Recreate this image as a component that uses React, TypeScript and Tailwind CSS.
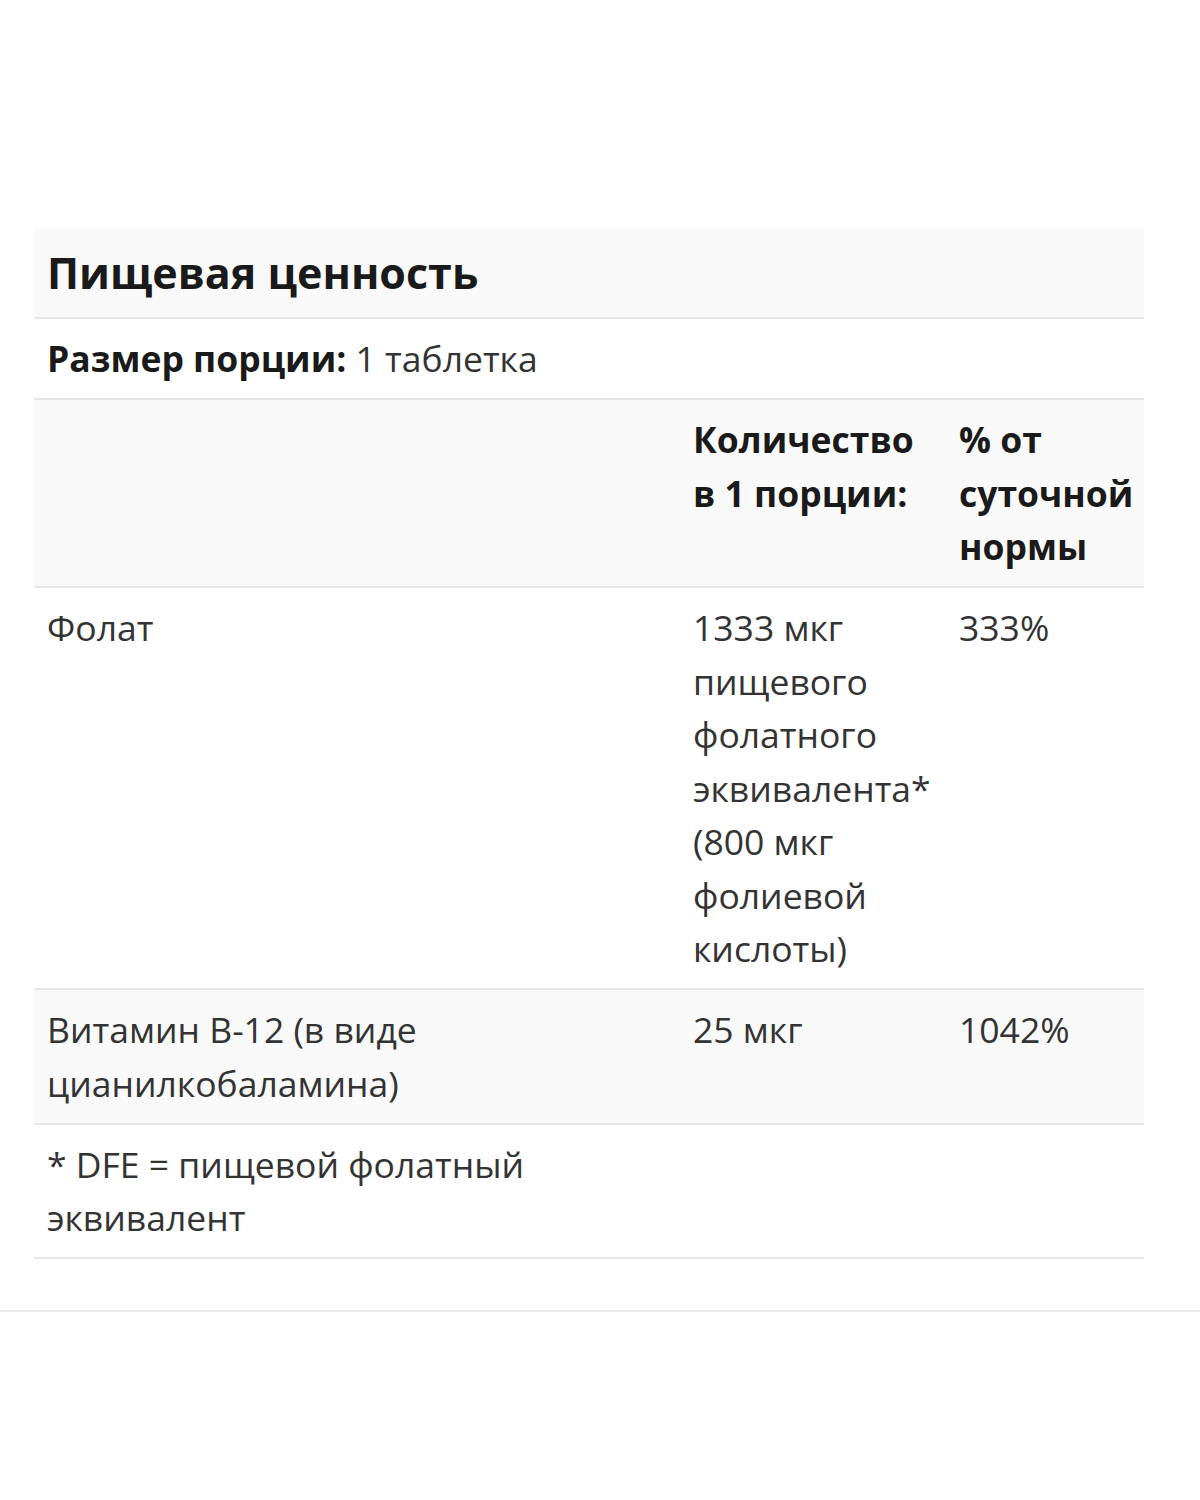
import { FC, ReactNode } from "react";

type Row = {
	name: ReactNode;
	amount: ReactNode;
	dv: ReactNode;
	shaded?: boolean;
	bold?: boolean;
};

const rows: Row[] = [
	{
		name: "",
		amount: (
			<>
				Количество
				<br />в 1 порции:
			</>
		),
		dv: "% от суточной нормы",
		shaded: true,
		bold: true,
	},
	{
		name: "Фолат",
		amount:
			"1333 мкг пищевого фолатного эквивалента* (800 мкг фолиевой кислоты)",
		dv: "333%",
	},
	{
		name: "Витамин B-12 (в виде цианилкобаламина)",
		amount: "25 мкг",
		dv: "1042%",
		shaded: true,
	},
];

const Cell: FC<{ children: ReactNode; bold?: boolean }> = ({
	children,
	bold,
}) => (
	<div
		className={
			"px-[13px] pt-[13px] pb-[12.5px] " +
			(bold ? "font-bold text-[#1a1a1a]" : "text-[#333]")
		}
	>
		{children}
	</div>
);

export default function App() {
	return (
		<div className="min-h-[1500px] bg-white pt-[228px] font-['Open_Sans',sans-serif] text-[35.5px] leading-[53.5px]">
			<div className="mx-[34px] w-[1110px]">
				<div className="border-b-2 border-[#e6e6e6] bg-[#f9f9f9] px-[13px] pt-[14px] pb-[13px] text-[43px] leading-[62px] font-bold text-[#1a1a1a]">
					Пищевая ценность
				</div>
				<div className="border-b-2 border-[#e6e6e6] px-[13px] pt-[13px] pb-[12.5px] text-[#333]">
					<span className="font-bold text-[#1a1a1a]">Размер порции:</span>{" "}
					1 таблетка
				</div>
				{rows.map((row, i) => (
					<div
						key={i}
						className={
							"grid grid-cols-[646px_266px_198px] border-b-2 border-[#e6e6e6] " +
							(row.shaded ? "bg-[#f9f9f9]" : "bg-white")
						}
					>
						<Cell bold={row.bold}>{row.name}</Cell>
						<Cell bold={row.bold}>{row.amount}</Cell>
						<Cell bold={row.bold}>{row.dv}</Cell>
					</div>
				))}
				<div className="border-b-2 border-[#e6e6e6] px-[13px] pt-[13px] pb-[12.5px] text-[#333]">
					<div className="w-[620px]">* DFE = пищевой фолатный эквивалент</div>
				</div>
			</div>
			<div className="mt-[51px] h-[2px] w-full bg-[#ececec]" />
		</div>
	);
}
